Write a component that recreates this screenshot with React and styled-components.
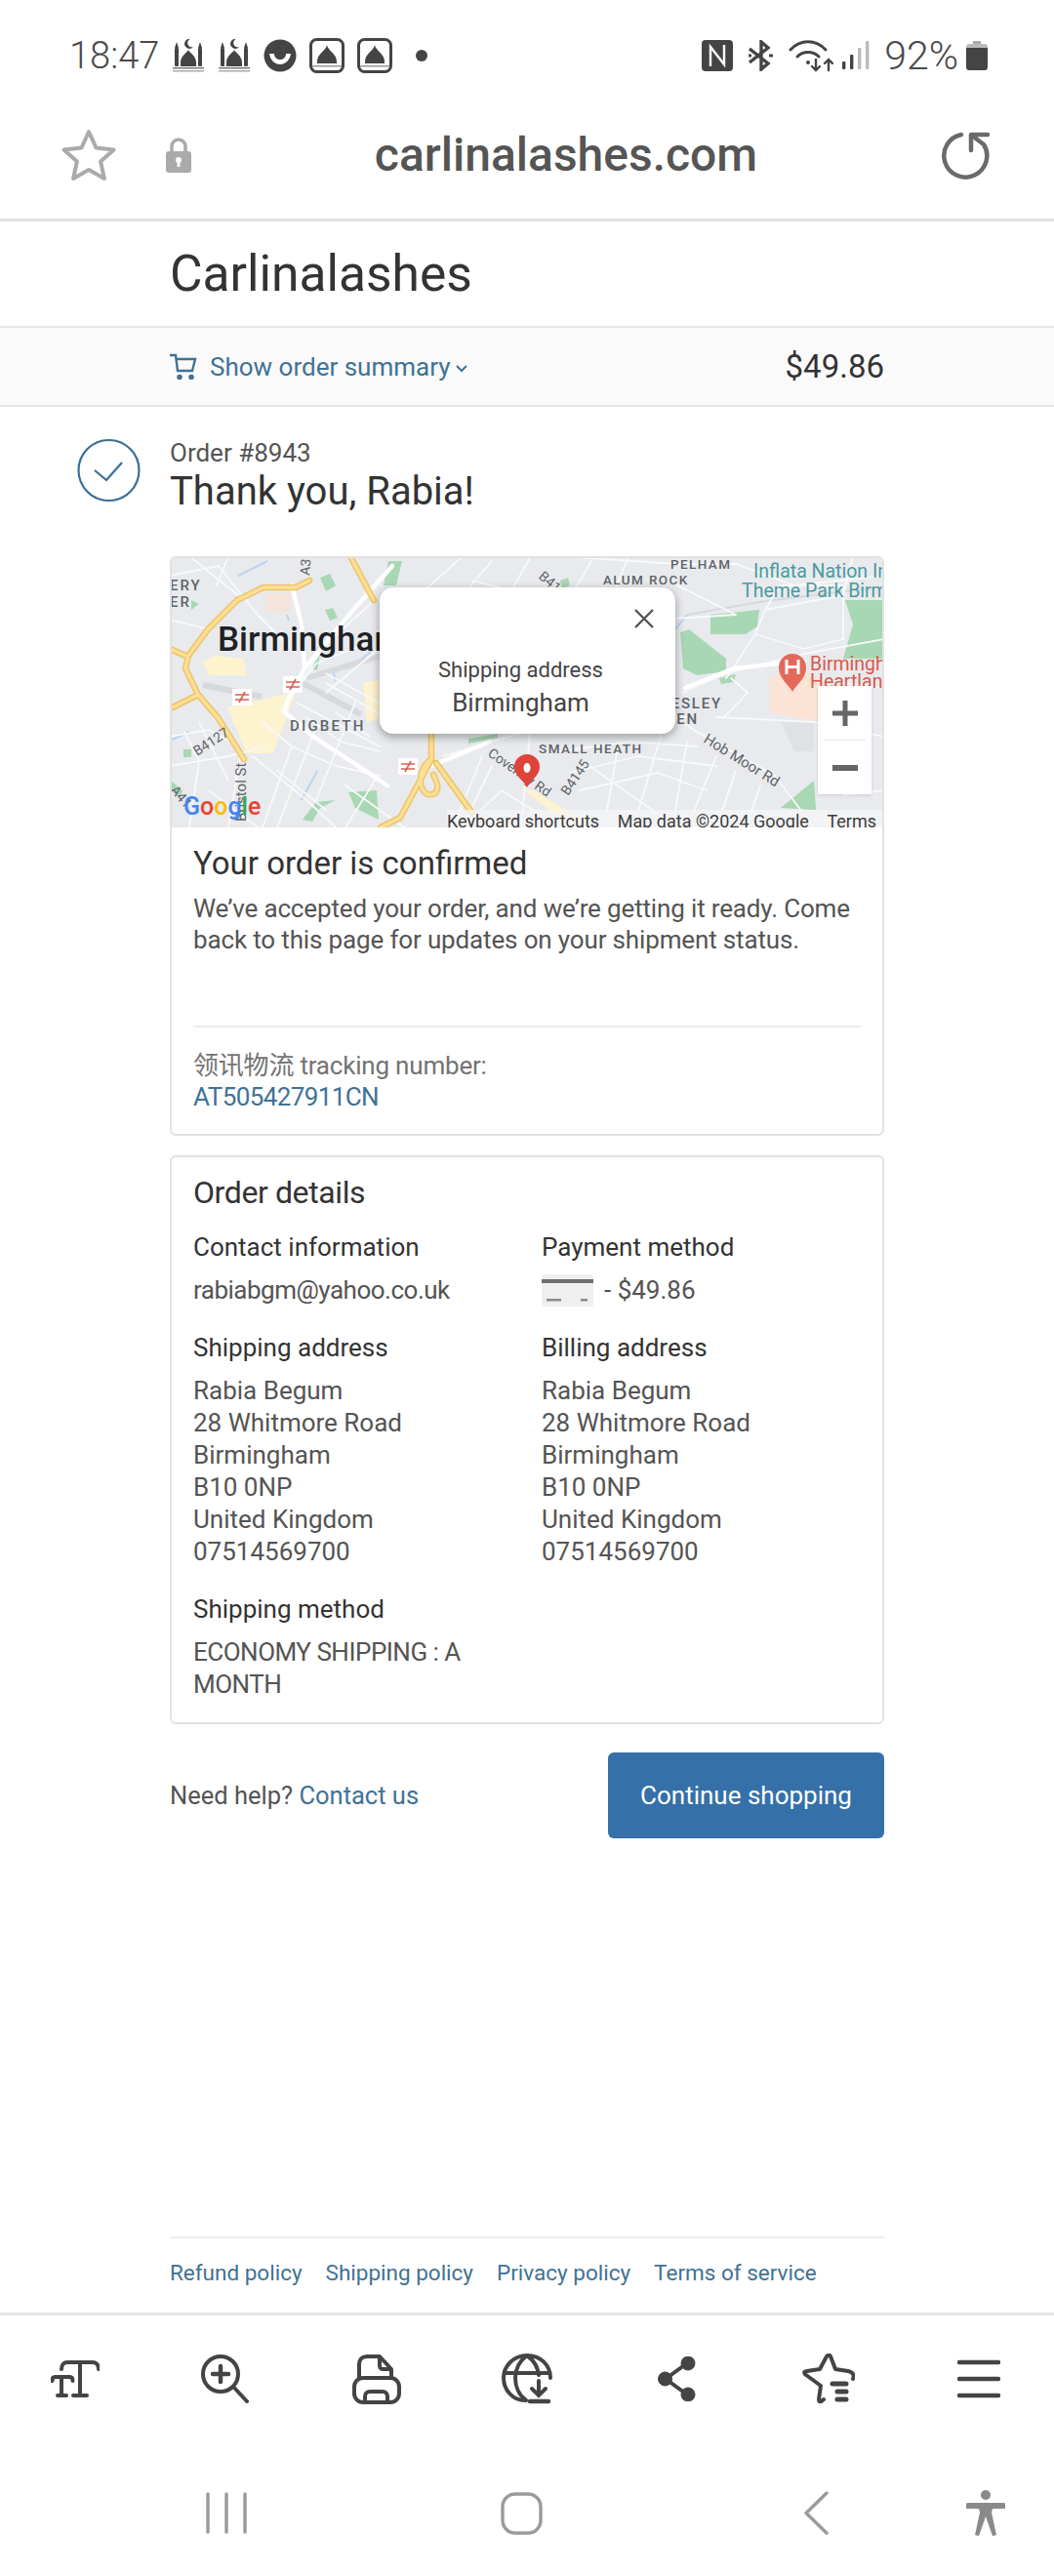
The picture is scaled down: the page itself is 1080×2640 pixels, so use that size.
import React from 'react'
import styled, { createGlobalStyle } from 'styled-components'

const GlobalStyle = createGlobalStyle`
  html, body { margin: 0; padding: 0; background: #fff; }
  * { box-sizing: border-box; }
  body { font-family: Roboto, "Noto Sans CJK SC", sans-serif; }
`

const Mosque = () => (
  <svg width="34" height="34" viewBox="0 0 34 34" fill="#444">
    <path d="M17 11c1 3 8 6 8 13v4H9v-4c0-7 7-10 8-13z" />
    <rect x="3" y="9" width="4" height="19" rx="1" />
    <rect x="27" y="9" width="4" height="19" rx="1" />
    <path d="M5 3l2 6H3zM29 3l2 6h-4z" />
    <path d="M19 0a5 5 0 1 0 3 8 4.200 4.200 0 1 1-3-8z" />
    <rect x="1" y="29" width="32" height="1.500" fill="#777" />
    <rect x="1" y="32" width="32" height="1.500" fill="#aaa" />
  </svg>
)

const Smile = () => (
  <svg width="34" height="34" viewBox="0 0 34 34">
    <circle cx="17" cy="17" r="16.500" fill="#444" />
    <path d="M6 15h22c-1 7-6 11-11 11S7 22 6 15z" fill="#fff" />
    <path d="M11 15h12c0 4-3 6-6 6s-6-2-6-6z" fill="#444" />
  </svg>
)

const Dome = () => (
  <svg width="36" height="36" viewBox="0 0 36 36">
    <rect x="1.500" y="1.500" width="33" height="33" rx="6" fill="none" stroke="#444" strokeWidth="3" />
    <path d="M18 7c1 6 10 9 10 17v2H8v-2c0-8 9-11 10-17z" fill="#444" />
    <rect x="3" y="28" width="30" height="1.500" fill="#999" />
  </svg>
)

const Nfc = () => (
  <svg width="32" height="32" viewBox="0 0 32 32">
    <rect width="32" height="32" rx="4" fill="#444" />
    <path d="M9 27V7l14 18V5" fill="none" stroke="#fff" strokeWidth="2.400" />
  </svg>
)

const Bluetooth = () => (
  <svg width="27" height="32" viewBox="0 0 27 32" fill="none" stroke="#444" strokeWidth="3.400">
    <path d="M2 9l19 15-7 6V2l7 6L2 23" />
    <path d="M22 16h4M1 16h3" strokeWidth="3" />
  </svg>
)

const Wifi = () => (
  <svg width="46" height="34" viewBox="0 0 46 34" fill="none" stroke="#444" strokeWidth="3" strokeLinecap="round">
    <path d="M2 11c10-11 26-11 36 0" />
    <path d="M9 18c6-6 16-6 22 0" />
    <circle cx="20" cy="24" r="2" fill="#444" stroke="none" />
    <path d="M28 21v11M24 28l4 4 4-4M41 32V21M37 25l4-4 4 4" strokeWidth="2.400" />
  </svg>
)

const Signal = () => (
  <svg width="28" height="29" viewBox="0 0 28 29">
    <rect x="0" y="21" width="3.400" height="8" rx="1" fill="#444" />
    <rect x="8" y="14" width="3.400" height="15" rx="1" fill="#444" />
    <rect x="16" y="7" width="3.400" height="22" rx="1" fill="#bbb" />
    <rect x="24" y="0" width="3.400" height="29" rx="1" fill="#bbb" />
  </svg>
)

const Battery = () => (
  <svg width="22" height="30" viewBox="0 0 22 30">
    <path d="M7 0h8v4H7z" fill="#aaa" />
    <path d="M3 3h16a3 3 0 0 1 3 3v2H0V6a3 3 0 0 1 3-3z" fill="#bbb" />
    <path d="M0 7h22v20a3 3 0 0 1-3 3H3a3 3 0 0 1-3-3z" fill="#444" />
  </svg>
)

const StarOutline = () => (
  <svg width="56" height="54" viewBox="0 0 56 54" fill="none" stroke="#aaa" strokeWidth="4" strokeLinejoin="round">
    <path d="M28 3l7.500 16.500 18 2-13.400 12 3.800 17.500L28 42l-15.900 9 3.800-17.500L2.500 21.500l18-2z" />
  </svg>
)

const Lock = () => (
  <svg width="26" height="36" viewBox="0 0 26 36">
    <path d="M6 15V9a7 7 0 0 1 14 0v6" fill="none" stroke="#aaa" strokeWidth="3.500" />
    <rect y="14" width="26" height="22" rx="3" fill="#aaa" />
    <circle cx="13" cy="23" r="3" fill="#fff" />
    <rect x="11.500" y="23" width="3" height="7" fill="#fff" />
  </svg>
)

const Reload = () => (
  <svg width="50" height="50" viewBox="0 0 50 50" fill="none" stroke="#6a6a6a" strokeWidth="4.500" strokeLinecap="round" strokeLinejoin="round">
    <path d="M21 4A22 22 0 1 0 44 14L32 5" />
    <path d="M48 4H31v16" />
  </svg>
)

const Cart = () => (
  <svg width="28" height="27" viewBox="0 0 28 27" fill="none" stroke="#3f7295" strokeWidth="2.400">
    <path d="M0 2h6l2 16h15l3-12H7" />
    <circle cx="10" cy="24.500" r="1.600" fill="#3f7295" />
    <circle cx="22" cy="24.500" r="1.600" fill="#3f7295" />
  </svg>
)

const Chevron = () => (
  <svg width="12" height="8" viewBox="0 0 12 8" fill="none" stroke="#3f7295" strokeWidth="2">
    <path d="M1 1l5 5 5-5" />
  </svg>
)

const CheckCircle = () => (
  <svg width="65" height="66" viewBox="0 0 65 66" fill="none" stroke="#3a6f96" strokeWidth="2.200">
    <circle cx="32.500" cy="33" r="31" />
    <path d="M18 33l12 10 16-18" />
  </svg>
)

const PayCard = () => (
  <svg width="53" height="33" viewBox="0 0 53 33">
    <rect width="53" height="33" rx="3" fill="#efefef" />
    <rect y="5" width="53" height="4" fill="#6e6e6e" />
    <rect x="5" y="25" width="15" height="2.500" fill="#8a8a8a" />
    <rect x="40" y="25" width="7" height="2.500" fill="#8a8a8a" />
  </svg>
)

const MinorRoads = [
  'M0 20L50 10L90 60L120 90', 'M20 0L70 40', 'M0 65L40 75', 'M60 0L48 30', 'M0 215L60 205L100 195', 'M0 185L40 178L66 192',
  'M15 180L30 210L20 278', 'M30 170L60 230', 'M95 170L125 195L170 215L215 225', 'M85 205L140 250L170 278', 'M125 195L95 278',
  'M150 175L110 278', 'M140 165L175 190L215 200', 'M170 160L205 185', 'M190 150L150 250', 'M120 150L150 110L200 90', 'M130 150L215 195',
  'M160 130L230 170', 'M160 120L240 165', 'M40 240L90 278', 'M72 205L60 278', 'M110 220L160 260', 'M180 235L240 278', 'M210 230L180 278',
  'M280 205L330 190L400 170L530 165', 'M320 205L290 278', 'M330 215L300 278L340 240L400 278', 'M370 170L360 278', 'M400 200L470 190L540 195',
  'M410 222L480 205L560 215', 'M420 240L500 222L550 240', 'M430 215L520 278', 'M460 190L445 278', 'M505 178L475 278', 'M530 190L515 278',
  'M560 205L530 278', 'M580 220L560 278', 'M605 235L590 278', 'M620 225L660 278', 'M510 160L540 180L620 225', 'M560 165L660 170L732 185',
  'M525 140L570 120L650 100L732 85', 'M570 125L600 80L610 55L690 40', 'M600 80L650 95L690 85', 'M610 55L625 30L690 30L690 85', 'M575 125L592 140L568 165',
  'M520 8L580 8L640 30L732 20', 'M432 5L400 60', 'M470 0L450 50', 'M520 30L580 60L500 65', 'M300 0L250 45L230 120', 'M330 5L300 40', 'M370 0L350 35L310 25',
  'M400 0L520 8', 'M690 130L732 135', 'M700 0L690 40', 'M660 270L732 278', 'M690 245L732 240', 'M220 90L160 140', 'M210 45L160 90L120 150L115 160'
]

const MapPicture = () => (
  <svg width="732" height="278" viewBox="0 0 732 278">
    <rect width="732" height="278" fill="#e8eaed" />
    <g fill="#f4e4dc">
      <path d="M96 38h29l-2 20h-23z" />
    </g>
    <g fill="#fdf3cf">
      <path d="M33 108l13-6 30 3 3 17H40z" />
      <path d="M59 155l70-16-23 63H79z" />
      <path d="M198 130l20-4v40l-16 4z" />
      <path d="M360 238l12 2 60 35-20 3z" />
    </g>
    <path d="M614 125l26-15 30 20-5 40-50-10z" fill="#fbe3d6" />
    <path d="M626 170l34 0 0 30-20 0z" fill="#dfe1e5" />
    <g fill="#a8d7b4">
      <path d="M154 22l10-4 6 12-10 6zM159 55l8-2 5 10-8 3zM224 5h14l-6 25h-13zM146 115l5-22 4 2-4 22zM183 242l29-2 2 30-24-12zM136 270l14-18 20-2-16 8-8 14zM1 230l12 10-2 8-10-8zM14 198h8v8h-8zM306 187l30-5v4l-30 6zM554 60l50-5-2 17-12 8h-36zM523 78l9-3 38 30v13l-30 4-14-7zM563 125l17-4-2 8-13 2zM692 45h40v60h-42l10-35zM626 258l34-28 2 30zM400 25l8-3 2 8-8 3zM22 45l8 4-8 6z" />
    </g>
    <g fill="none" stroke="#b9d3f0" strokeWidth="2">
      <path d="M70 20l30-15M120 60l2 6M20 180l-18 8M190 110l16-12M168 120l2 8M135 250l16-30M510 85l20-25M270 210l30 40" />
    </g>
    <g fill="none" stroke="#d7d9dd" strokeWidth="6">
      <path d="M34 132l60 12" />
      <path d="M140 125l80-24" />
      <path d="M136 130l60 32" />
      <path d="M530 60l80-14 122-15" strokeWidth="2" />
    </g>
    <g fill="none" stroke="#f8f9fa" strokeWidth="1.800" strokeLinecap="round" strokeLinejoin="round">
      {MinorRoads.map(d => <path key={d} d={d} />)}
    </g>
    <g fill="none" stroke="#fff" strokeWidth="4.500" strokeLinecap="round" strokeLinejoin="round">
      <path d="M125 30l10 40 3 45-16 30-5 14 30 26 46 30 30 20" />
      <path d="M228 10l-40 45-50 60" />
      <path d="M528 135l50-20 72-8" />
      <path d="M268 215l60-25" />
    </g>
    <g fill="none" strokeLinejoin="round" strokeLinecap="round">
      <path d="M143 25l-14 7H96L69 45 39 75 19 102l-3 13 13 27 20 23 17 27 10 16M0 95l16 7M3 155l26-13M186 2l23 43M268 182v26l-32 60-20 10M273 212l36 50M268 208c-14 10-14 30-4 36 10 2 14-6 6-20" stroke="#eec468" strokeWidth="6.500" />
      <path d="M143 25l-14 7H96L69 45 39 75 19 102l-3 13 13 27 20 23 17 27 10 16M0 95l16 7M3 155l26-13M186 2l23 43M268 182v26l-32 60-20 10M273 212l36 50M268 208c-14 10-14 30-4 36 10 2 14-6 6-20" stroke="#fbdf96" strokeWidth="3.500" />
    </g>
    <g fill="#fff">
      <rect x="64" y="136" width="20" height="17" />
      <rect x="116" y="123" width="20" height="17" />
      <rect x="234" y="207" width="20" height="17" />
    </g>
    <g stroke="#d9604f" strokeWidth="1.600" fill="none">
      <path d="M67 142h14M67 147h14M77 139l-6 11M119 129h14M119 134h14M129 126l-6 11M237 213h14M237 218h14M247 210l-6 11" />
    </g>
    <g fontFamily="Roboto, sans-serif" fill="#5f6368" fontWeight="500">
      <text x="0" y="35" fontSize="15" letterSpacing="2">ERY</text>
      <text x="0" y="52" fontSize="15" letterSpacing="2">ER</text>
      <text x="123" y="179" fontSize="15" letterSpacing="2.200">DIGBETH</text>
      <text x="513" y="13" fontSize="13.500" letterSpacing="1.400">PELHAM</text>
      <text x="444" y="29" fontSize="13.500" letterSpacing="1.400">ALUM ROCK</text>
      <text x="378" y="202" fontSize="13.500" letterSpacing="1.500">SMALL HEATH</text>
      <text x="566" y="156" fontSize="15" letterSpacing="1.800" textAnchor="end">BORDESLEY</text>
      <text x="542" y="172" fontSize="15" letterSpacing="1.800" textAnchor="end">GREEN</text>
      <g fontSize="14" fontWeight="400">
        <text transform="translate(28 205) rotate(-33)">B4127</text>
        <text transform="translate(78 272) rotate(-90)" fontSize="15">Bristol St</text>
        <text transform="translate(143 20) rotate(-85)">A38</text>
        <text transform="translate(0 240) rotate(50)">A41</text>
        <text transform="translate(325 204) rotate(35)">Coventry Rd</text>
        <text transform="translate(408 246) rotate(-56)">B4145</text>
        <text transform="translate(546 190) rotate(32)" fontSize="15">Hob Moor Rd</text>
        <text transform="translate(377 22) rotate(40)">B4145</text>
      </g>
    </g>
    <text x="49" y="97" fontFamily="Roboto, sans-serif" fontSize="35" fontWeight="500" fill="#202124">Birmingham</text>
    <g fontFamily="Roboto, sans-serif" fontSize="19.500">
      <text x="598" y="22" fill="#4b9aa0">Inflata Nation Indoor</text>
      <text x="586" y="42" fill="#4b9aa0">Theme Park Birmingham</text>
      <text x="656" y="117" fill="#d9584b">Birmingham</text>
      <text x="656" y="135" fill="#d9584b">Heartlands</text>
    </g>
    <path d="M638 139c-4-8-14-13-14-25a14 14 0 0 1 28 0c0 12-10 17-14 25z" fill="#e5695a" />
    <path d="M632 106v15M644 106v15M632 113.500h12" stroke="#fff" strokeWidth="3" />
    <path d="M366 237c-4-8-13-12-13-21a13 13 0 0 1 26 0c0 9-9 13-13 21z" fill="#e0433a" />
    <ellipse cx="366" cy="217" rx="3.500" ry="5" fill="#fff" />
    <text x="14" y="265" fontFamily="Roboto, sans-serif" fontSize="25" fontWeight="500">
      <tspan fill="#4285f4">G</tspan><tspan fill="#ea4335">o</tspan><tspan fill="#fbbc05">o</tspan><tspan fill="#4285f4">g</tspan><tspan fill="#34a853">l</tspan><tspan fill="#ea4335">e</tspan>
    </text>
  </svg>
)

const FontSizeIcon = () => (
  <svg width="50" height="40" viewBox="0 0 50 40" fill="none" stroke="#444" strokeWidth="4" strokeLinecap="round">
    <path d="M11 10c0-5 3-7 6-7h26c3 0 6 2 6 7" />
    <path d="M30 3v34M23 37h14" />
    <path d="M1.500 22c0-3 1.500-4 3-4h15c1.500 0 3 1 3 4M11 18v19M7 37h9" />
  </svg>
)

const ZoomIcon = () => (
  <svg width="50" height="50" viewBox="0 0 50 50" fill="none" stroke="#444" strokeWidth="4" strokeLinecap="round">
    <circle cx="20" cy="20" r="18" />
    <path d="M20 12v16M12 20h16" strokeWidth="4.500" />
    <path d="M34 34l13 14" />
  </svg>
)

const PrintIcon = () => (
  <svg width="50" height="51" viewBox="0 0 50 51" fill="none" stroke="#444" strokeWidth="4" strokeLinejoin="round" strokeLinecap="round">
    <path d="M7 24V10c0-5 3-8 8-8h13l12 13v9" />
    <path d="M28 3v8c0 3 1 4 4 4h7" />
    <rect x="2" y="24" width="46" height="25" rx="9" />
    <path d="M13 49v-6c0-3 2-5 5-5h13c3 0 5 2 5 5v6" />
  </svg>
)

const GlobeIcon = () => (
  <svg width="52" height="52" viewBox="0 0 52 52" fill="none" stroke="#444" strokeWidth="4" strokeLinecap="round">
    <path d="M24 48C11 48 2 37 2 25S12 2 26 2s24 10 24 23" />
    <path d="M26 2c-8 6-12 14-12 23s4 18 11 23" />
    <path d="M26 2c7 5 11 11 12 20" />
    <path d="M3 20h46" />
    <path d="M38 28v14M31 36l7 7 7-7" />
    <path d="M29 49h19" strokeWidth="4.500" />
  </svg>
)

const ShareIcon = () => (
  <svg width="40" height="46" viewBox="0 0 40 46" fill="#444" stroke="#444">
    <path d="M30 7L8 23l22 16" fill="none" strokeWidth="4" />
    <circle cx="31" cy="7" r="7" />
    <circle cx="7.500" cy="23" r="7" />
    <circle cx="31" cy="39" r="7" />
  </svg>
)

const BookmarksIcon = () => (
  <svg width="54" height="52" viewBox="0 0 54 52" fill="none" stroke="#444" strokeWidth="4" strokeLinejoin="round" strokeLinecap="round">
    <path d="M31 31h14M36 39h9M36 47h9" strokeWidth="5" />
    <path d="M22 47c-3 3-5 3-5 0l2-14L4 22c-3-2-2-4 1-4l13-2 7-13c2-2 3-2 4 0l5 13 13 2c4 1 7 3 5 8" />
  </svg>
)

const MenuIcon = () => (
  <svg width="44" height="40" viewBox="0 0 44 40" fill="none" stroke="#444" strokeWidth="4.500" strokeLinecap="round">
    <path d="M2 3h40M2 20h40M2 37h40" />
  </svg>
)

const NavLines = () => (
  <svg width="42" height="43" viewBox="0 0 42 43" stroke="#9a9a9a" strokeWidth="3.400" strokeLinecap="round">
    <path d="M2 2v39M21 2v39M40 2v39" />
  </svg>
)

const NavHome = () => (
  <svg width="43" height="44" viewBox="0 0 43 44" fill="none" stroke="#9a9a9a" strokeWidth="3.400">
    <rect x="2" y="2" width="39" height="40" rx="13" />
  </svg>
)

const NavBack = () => (
  <svg width="25" height="45" viewBox="0 0 25 45" fill="none" stroke="#9a9a9a" strokeWidth="3.400" strokeLinecap="round" strokeLinejoin="round">
    <path d="M23 2L2 22.500 23 43" />
  </svg>
)

const NavAccessibility = () => (
  <svg width="40" height="48" viewBox="0 0 40 48" fill="#8a8a8a">
    <circle cx="20" cy="5" r="5" />
    <path d="M2 13h36a1.500 1.500 0 0 1 0 6H27l-1 4 5 23-4 1-7-20-7 20-4-1 5-23-1-4H2a1.500 1.500 0 0 1 0-6z" />
  </svg>
)

const App = () => {
  return (
    <Page>
      <GlobalStyle />

      <StatusBar>
        <StatusGroup>
          <Clock>18:47</Clock>
          <Mosque />
          <Mosque />
          <Smile />
          <Dome />
          <Dome />
          <StatusDot />
        </StatusGroup>
        <StatusGroup $gap={15}>
          <Nfc />
          <Bluetooth />
          <StatusGroup $gap={9}>
            <Wifi />
            <Signal />
          </StatusGroup>
          <StatusGroup $gap={8}>
            <BatteryLevel>92%</BatteryLevel>
            <Battery />
          </StatusGroup>
        </StatusGroup>
      </StatusBar>

      <AddressBar>
        <StarOutline />
        <Lock />
        <UrlText>carlinalashes.com</UrlText>
        <Reload />
      </AddressBar>

      <ShopHeader>
        <ShopName>Carlinalashes</ShopName>
      </ShopHeader>

      <SummaryBar>
        <SummaryToggle>
          <Cart />
          <span>Show order summary</span>
          <ChevronSlot><Chevron /></ChevronSlot>
        </SummaryToggle>
        <SummaryTotal>$49.86</SummaryTotal>
      </SummaryBar>

      <OrderHead>
        <CheckCircle />
        <div>
          <OrderNumber>Order #8943</OrderNumber>
          <ThankYou>Thank you, Rabia!</ThankYou>
        </div>
      </OrderHead>

      <Main>
        <Card>
          <MapBox>
            <MapPicture />
            <MapPopup>
              <PopupClose viewBox="0 0 20 20"><path d="M1 1l18 18M19 1L1 19" /></PopupClose>
              <PopupLabel>Shipping address</PopupLabel>
              <PopupCity>Birmingham</PopupCity>
            </MapPopup>
            <ZoomControls>
              <ZoomButton>
                <svg width="26" height="26" viewBox="0 0 26 26" fill="#666"><path d="M10.500 0h5v10.500H26v5H15.500V26h-5V15.500H0v-5h10.500z" /></svg>
              </ZoomButton>
              <ZoomDivider />
              <ZoomButton>
                <svg width="26" height="6" viewBox="0 0 26 6" fill="#666"><rect width="26" height="6" /></svg>
              </ZoomButton>
            </ZoomControls>
            <Attribution>
              <span>Keyboard shortcuts</span>
              <span>Map data ©2024 Google</span>
              <span>Terms</span>
            </Attribution>
          </MapBox>
          <ConfirmBody>
            <CardTitle>Your order is confirmed</CardTitle>
            <Paragraph>We’ve accepted your order, and we’re getting it ready. Come back to this page for updates on your shipment status.</Paragraph>
            <BodyDivider />
            <TrackingLabel>领讯物流 tracking number:</TrackingLabel>
            <TrackingLink>AT505427911CN</TrackingLink>
          </ConfirmBody>
        </Card>

        <DetailsCard>
          <DetailsHeading>Order details</DetailsHeading>
          <DetailsGrid>
            <section>
              <DetailTitle>Contact information</DetailTitle>
              <TightDetailText>rabiabgm@yahoo.co.uk</TightDetailText>
            </section>
            <section>
              <DetailTitle>Payment method</DetailTitle>
              <PaymentRow><PayCard /><span>- $49.86</span></PaymentRow>
            </section>
            <section>
              <DetailTitle>Shipping address</DetailTitle>
              <DetailText>Rabia Begum<br />28 Whitmore Road<br />Birmingham<br />B10 0NP<br />United Kingdom<br />07514569700</DetailText>
            </section>
            <section>
              <DetailTitle>Billing address</DetailTitle>
              <DetailText>Rabia Begum<br />28 Whitmore Road<br />Birmingham<br />B10 0NP<br />United Kingdom<br />07514569700</DetailText>
            </section>
            <section>
              <DetailTitle>Shipping method</DetailTitle>
              <TightDetailText>ECONOMY SHIPPING : A<br />MONTH</TightDetailText>
            </section>
          </DetailsGrid>
        </DetailsCard>

        <HelpRow>
          <HelpText>Need help? <HelpLink>Contact us</HelpLink></HelpText>
          <ContinueButton>Continue shopping</ContinueButton>
        </HelpRow>
      </Main>

      <PolicyFooter>
        <PolicyLink>Refund policy</PolicyLink>
        <PolicyLink>Shipping policy</PolicyLink>
        <PolicyLink>Privacy policy</PolicyLink>
        <PolicyLink>Terms of service</PolicyLink>
      </PolicyFooter>

      <Toolbar>
        <FontSizeIcon />
        <ZoomIcon />
        <PrintIcon />
        <GlobeIcon />
        <ShareIcon />
        <BookmarksIcon />
        <MenuIcon />
      </Toolbar>

      <NavBar>
        <NavLines />
        <NavHome />
        <NavBack />
        <NavAccessibility />
      </NavBar>
    </Page>
  )
}

export default App

/* ===========================
   Styled Components
=========================== */

const Page = styled.div`
  width: 1080px;
  height: 2640px;
  display: flex;
  flex-direction: column;
  overflow: hidden;
  background: #fff;
`

const StatusBar = styled.div`
  height: 105px;
  padding: 8px 68px 0 71px;
  display: flex;
  justify-content: space-between;
  align-items: center;
`

const StatusGroup = styled.div`
  display: flex;
  align-items: center;
  gap: ${p => p.$gap || 13}px;
`

const Clock = styled.span`
  font-size: 38px;
  font-weight: 300;
  color: #4a4a4a;
`

const BatteryLevel = styled(Clock)`
  font-size: 41px;
`

const StatusDot = styled.span`
  width: 12px;
  height: 12px;
  margin-left: 11px;
  border-radius: 50%;
  background: #444;
`

const AddressBar = styled.div`
  height: 122px;
  padding: 0 66px 12px 63px;
  display: flex;
  align-items: center;
  gap: 51px;
  border-bottom: 3px solid #e2e2e2;
`

const UrlText = styled.div`
  flex: 1;
  text-align: center;
  font-size: 48px;
  font-weight: 500;
  color: #555;
`

const ShopHeader = styled.div`
  height: 107px;
  padding-left: 174px;
  display: flex;
  align-items: center;
`

const ShopName = styled.div`
  font-size: 51.5px;
  color: #333;
`

const SummaryBar = styled.div`
  height: 83px;
  padding: 0 174px;
  display: flex;
  justify-content: space-between;
  align-items: center;
  background: #fafafa;
  border-top: 2px solid #e6e6e6;
  border-bottom: 2px solid #e6e6e6;
`

const SummaryToggle = styled.div`
  display: flex;
  align-items: center;
  gap: 13px;
  font-size: 26px;
  color: #3f7295;
`

const ChevronSlot = styled.span`
  display: flex;
  margin: 4px 0 0 -8px;
`

const SummaryTotal = styled.div`
  font-size: 33px;
  color: #333;
`

const OrderHead = styled.div`
  height: 153px;
  padding: 32px 0 0 79px;
  display: flex;
  gap: 30px;
`

const OrderNumber = styled.div`
  font-size: 26px;
  line-height: 30px;
  color: #555;
`

const ThankYou = styled.div`
  font-size: 40px;
  line-height: 50px;
  color: #333;
`

const Main = styled.main`
  width: 732px;
  margin-left: 174px;
  display: flex;
  flex-direction: column;
  gap: 20px;
`

const Card = styled.div`
  border: 2px solid #e2e2e2;
  border-radius: 6px;
  overflow: hidden;
`

const MapBox = styled.div`
  position: relative;
  width: 732px;
  height: 278px;
  margin: -2px;
  overflow: hidden;

  > svg {
    display: block;
  }
`

const MapPopup = styled.div`
  position: absolute;
  left: 215px;
  top: 32px;
  width: 303px;
  height: 150px;
  padding: 70px 14px 0 0;
  border-radius: 14px;
  background: #fff;
  text-align: center;
  box-shadow: 0 3px 8px 1px rgba(0, 0, 0, 0.3);
`

const PopupClose = styled.svg`
  position: absolute;
  top: 22px;
  right: 22px;
  width: 20px;
  height: 20px;
  fill: none;
  stroke: #555;
  stroke-width: 2.4;
`

const PopupLabel = styled.div`
  font-size: 22px;
  line-height: 30px;
  color: #444;
`

const PopupCity = styled.div`
  font-size: 26px;
  line-height: 36px;
  color: #444;
`

const ZoomControls = styled.div`
  position: absolute;
  left: 664px;
  top: 133px;
  width: 55px;
  height: 111px;
  background: #fff;
  box-shadow: 0 1px 3px rgba(0, 0, 0, 0.15);
`

const ZoomButton = styled.div`
  height: 55px;
  display: flex;
  align-items: center;
  justify-content: center;
`

const ZoomDivider = styled.div`
  height: 1px;
  margin: 0 6px;
  background: #e6e6e6;
`

const Attribution = styled.div`
  position: absolute;
  left: 284px;
  right: 0;
  bottom: 0;
  height: 18px;
  padding: 0 8px 0 0;
  display: flex;
  justify-content: space-between;
  overflow: hidden;
  background: rgba(245, 245, 245, 0.75);
  font-size: 18px;
  line-height: 24px;
  color: #3c3c3c;
`

const ConfirmBody = styled.div`
  padding: 17px 22px 22px;
`

const CardTitle = styled.h2`
  margin: 0;
  font-size: 33px;
  line-height: 44px;
  font-weight: 400;
  color: #333;
`

const DetailsHeading = styled(CardTitle)`
  font-size: 32px;
  letter-spacing: -0.4px;
`

const Paragraph = styled.p`
  margin: 8px 0 0;
  font-size: 26px;
  line-height: 32px;
  letter-spacing: -0.15px;
  color: #545454;
`

const BodyDivider = styled.div`
  height: 2px;
  margin: 72px 0 23px;
  background: #ececec;
`

const TrackingLabel = styled.div`
  font-size: 26px;
  line-height: 32px;
  letter-spacing: -0.2px;
  color: #737373;
`

const TrackingLink = styled.div`
  font-size: 26px;
  line-height: 32px;
  letter-spacing: -0.6px;
  color: #3f7295;
`

const DetailsCard = styled.div`
  border: 2px solid #e2e2e2;
  border-radius: 6px;
  padding: 14px 22px 22px;
`

const DetailsGrid = styled.div`
  margin-top: 18px;
  display: grid;
  grid-template-columns: 357px 1fr;
  row-gap: 26px;
`

const DetailTitle = styled.h3`
  margin: 0 0 11px;
  font-size: 26px;
  line-height: 33px;
  font-weight: 400;
  color: #333;
`

const DetailText = styled.div`
  font-size: 26px;
  line-height: 33px;
  color: #545454;
`

const TightDetailText = styled(DetailText)`
  letter-spacing: -0.5px;
`

const PaymentRow = styled.div`
  display: flex;
  align-items: center;
  gap: 11px;
  font-size: 26px;
  line-height: 33px;
  color: #545454;
`

const HelpRow = styled.div`
  margin-top: 9px;
  display: flex;
  justify-content: space-between;
  align-items: center;
`

const HelpText = styled.div`
  font-size: 25.5px;
  color: #545454;
`

const HelpLink = styled.span`
  color: #3f7295;
`

const ContinueButton = styled.button`
  width: 283px;
  height: 88px;
  border: 0;
  border-radius: 6px;
  background: #3670a8;
  font-family: inherit;
  font-size: 26px;
  color: #fff;
`

const PolicyFooter = styled.footer`
  width: 732px;
  height: 78px;
  margin: auto 0 0 174px;
  padding-bottom: 6px;
  display: flex;
  align-items: center;
  gap: 24px;
  border-top: 2px solid #ededed;
`

const PolicyLink = styled.a`
  font-size: 22.5px;
  color: #3f7295;
`

const Toolbar = styled.div`
  height: 133px;
  display: grid;
  grid-template-columns: repeat(7, 1fr);
  align-items: center;
  justify-items: center;
  border-top: 3px solid #e6e6e6;
`

const NavBar = styled.div`
  height: 137px;
  padding: 8px 0 0 81px;
  display: grid;
  grid-template-columns: 302px 302px 302px 46px;
  align-items: center;
  justify-items: center;
`
